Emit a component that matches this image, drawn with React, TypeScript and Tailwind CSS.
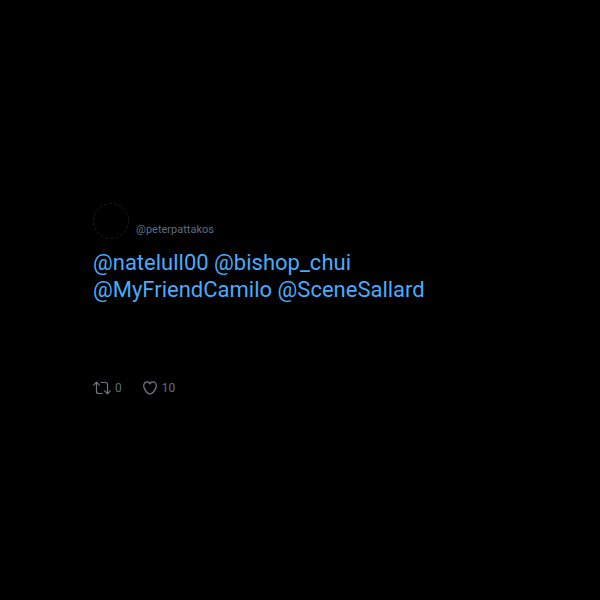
import React from 'react';

const author = { handle: '@peterpattakos', url: '#peterpattakos' };
const mentions = ['@natelull00', '@bishop_chui', '@MyFriendCamilo', '@SceneSallard'];
const stats = { retweets: 0, likes: 10 };

const RetweetIcon = () => (
  <svg
    className="text-[#70777e]"
    width="18"
    height="14"
    viewBox="0 0 18 14"
    fill="none"
    stroke="currentColor"
    strokeWidth="1.2"
    strokeLinecap="round"
    strokeLinejoin="round"
    aria-hidden="true"
  >
    <path d="M0.7 4.2L3.5 1.2L6.3 4.2M3.5 1.4V10.5Q3.5 12.5 5.5 12.5H9.3" />
    <path d="M17.3 9.8L14.5 12.8L11.7 9.8M14.5 12.6V3.5Q14.5 1.5 12.5 1.5H8.2" />
  </svg>
);

const HeartIcon = () => (
  <svg
    className="text-[#70777e]"
    width="14"
    height="14"
    viewBox="0 0 14 14"
    fill="none"
    stroke="currentColor"
    strokeWidth="1.3"
    strokeLinejoin="round"
    aria-hidden="true"
  >
    <path d="M7 13.1C5.2 13.1 0.7 9 0.7 4.8C0.7 2.5 2.3 0.9 4.2 0.9C5.9 0.9 6.7 2.1 7 2.9C7.3 2.1 8.1 0.9 9.8 0.9C11.7 0.9 13.3 2.5 13.3 4.8C13.3 9 8.8 13.1 7 13.1Z" />
  </svg>
);

const App: React.FC = () => {
  return (
    <main className="flex min-h-screen items-center bg-black px-[15.5%] font-[Roboto,sans-serif]">
      <article className="w-full pb-px">
        <header className="flex items-end gap-[7px]">
          <svg className="size-9" viewBox="0 0 36 36" fill="none" aria-hidden="true">
            <circle
              cx="18"
              cy="18"
              r="17.5"
              stroke="#252525"
              strokeWidth="0.8"
              strokeDasharray="3 2"
            />
          </svg>
          <a href={author.url} className="pb-px text-[11px] leading-4 text-[#5b7083]">
            {author.handle}
          </a>
        </header>

        <p className="mt-[10px] text-[22px] leading-[27px] text-[#4aabfa]">
          {mentions.map((mention) => (
            <React.Fragment key={mention}>
              <a href={`#${mention.slice(1)}`}>{mention}</a>{' '}
            </React.Fragment>
          ))}
        </p>

        <footer className="mt-[77px] flex items-center gap-[21px] text-xs text-[#5b7083]">
          <button type="button" aria-label="Retweets" className="flex items-center gap-1">
            <RetweetIcon />
            <span>{stats.retweets}</span>
          </button>
          <button type="button" aria-label="Likes" className="flex items-center gap-[5px]">
            <HeartIcon />
            <span>{stats.likes}</span>
          </button>
        </footer>
      </article>
    </main>
  );
};

export default App;
